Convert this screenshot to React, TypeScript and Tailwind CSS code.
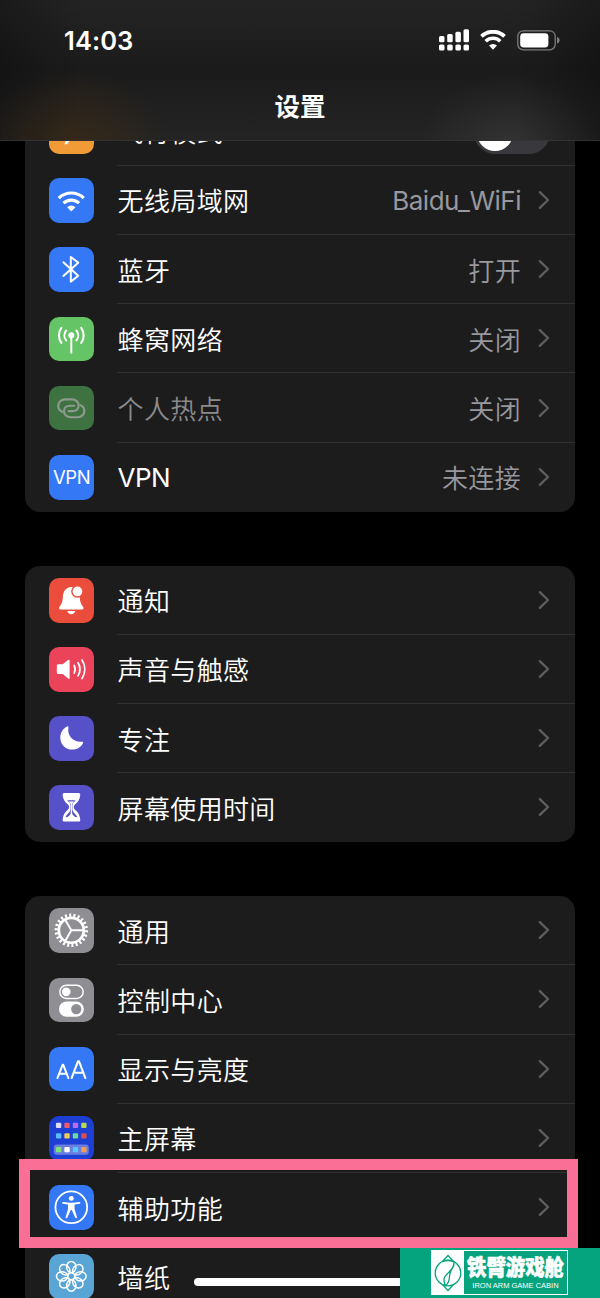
import type { ReactNode } from "react";

type RowData = {
  label: string;
  icon: ReactNode;
  tile: string;
  value?: string;
  dimmed?: boolean;
  toggle?: boolean;
};

const Glyph = ({ children }: { children: ReactNode }) => (
  <svg viewBox="0 0 45 45" className="block size-full" fill="none" stroke="none">
    {children}
  </svg>
);

const PlaneIcon = () => (
  <Glyph>
    <path d="M37 22c0-2-2-2.600-4-2.600h-6L19 8h-3l4 11.400h-6L11 16H8.500l2 6.500-2 6.500H11l3-3.500h6L15.500 35.500H18l9-10h6c2 0 4-1 4-3.500Z" fill="#fff" />
  </Glyph>
);

const WifiIcon = () => (
  <Glyph>
    <path d="M9.900 20.300a18 18 0 0 1 25.200 0" stroke="#fff" strokeWidth="3.200" />
    <path d="M14.600 25.400a11.500 11.500 0 0 1 15.800 0" stroke="#fff" strokeWidth="3.200" />
    <path d="M18.300 29.500a6 6 0 0 1 8.400 0l-4.200 4.200Z" fill="#fff" />
  </Glyph>
);

const BluetoothIcon = () => (
  <Glyph>
    <path d="m14.500 15.500 15 13.500-7.500 6V10l7.500 5.800-15 13.400" stroke="#fff" strokeWidth="2" strokeLinejoin="round" strokeLinecap="round" />
  </Glyph>
);

const CellularIcon = () => (
  <Glyph>
    <circle cx="22.500" cy="18.500" r="3" fill="#fff" />
    <path d="M22.500 19v17" stroke="#fff" strokeWidth="2" strokeLinecap="round" />
    <path
      d="M17.300 13.600a8 8 0 0 0 0 10M12.500 11a13 13 0 0 0 0 15.200M27.700 13.600a8 8 0 0 1 0 10M32.500 11a13 13 0 0 1 0 15.200"
      stroke="#fff"
      strokeWidth="2.100"
      strokeLinecap="round"
    />
  </Glyph>
);

const HotspotIcon = () => (
  <Glyph>
    <path
      d="M13.200 25.900C10.700 24.600 9.300 22.500 9.300 20.100c0-3.700 3-6.600 6.700-6.600h7.300c3.700 0 6.600 2.700 6.600 6.200s-2.800 5.600-5.700 5.600h-4.500"
      stroke="#8d9a8e"
      strokeWidth="2.200"
      strokeLinecap="round"
    />
    <path
      d="M31.800 19.300c2.500 1.300 3.900 3.400 3.900 5.800 0 3.700-3 6.400-6.700 6.400h-7.300c-3.700 0-6.600-2.600-6.600-6.100s2.800-5.500 5.700-5.500h4.500"
      stroke="#8d9a8e"
      strokeWidth="2.200"
      strokeLinecap="round"
    />
  </Glyph>
);

const BellIcon = ({ color }: { color: string }) => (
  <Glyph>
    <path
      d="M22.500 9c-5.600.5-8.300 4.500-8.500 10-.2 5-1.300 7.300-3 9.500-1.400 1.700-1.200 3.300 1 3.300h21c2.200 0 2.400-1.600 1-3.300-1.700-2.200-2.800-4.500-3-9.500-.2-5.500-2.900-9.500-8.500-10Z"
      fill="#fff"
    />
    <path d="M18.500 33.400h8c-.4 2-1.900 3.200-4 3.200s-3.600-1.200-4-3.200Z" fill="#fff" />
    <circle cx="28.700" cy="13.600" r="6.300" fill={color} />
    <circle cx="28.700" cy="13.600" r="4.900" fill="#fff" />
  </Glyph>
);

const SpeakerIcon = () => (
  <Glyph>
    <path d="M9.500 17.500h4.300l5.500-4.400c.8-.6 1.500-.3 1.500.7v17.400c0 1-.7 1.300-1.500.7l-5.500-4.600H9.500c-1 0-1.600-.6-1.600-1.600v-6.600c0-1 .6-1.600 1.600-1.600Z" fill="#fff" />
    <path
      d="M25.400 18.700c1.300 2.400 1.300 5.200 0 7.600M29.300 15.900c2.400 4 2.400 9.200 0 13.200M33.300 13.200c3.700 5.700 3.700 12.900 0 18.600"
      stroke="#fff"
      strokeWidth="1.800"
      strokeLinecap="round"
    />
  </Glyph>
);

const MoonIcon = () => (
  <Glyph>
    <path d="M18.300 10.600c.8-.4 1.500.1 1.300 1-1.500 8.200 5 15.300 13.600 14.300 1-.1 1.500.6 1 1.500-2 4-6.100 6.500-10.800 6.500-6.700 0-12-5.300-12-12 0-5 2.600-9.300 6.900-11.300Z" fill="#fff" />
  </Glyph>
);

const HourglassIcon = () => (
  <Glyph>
    <path
      d="M15.500 8h14.300c1.400 0 2 1 1.700 2.300-.5 4.500-2.200 6.800-5 9.200-2 1.700-2 3.900 0 5.700 2.800 2.400 4.500 4.700 5 9.300.3 1.400-.3 2.400-1.700 2.400H15.500c-1.400 0-2-1-1.700-2.400.5-4.600 2.200-6.900 5-9.300 2-1.800 2-4 0-5.700-2.800-2.400-4.500-4.700-5-9.200C13.500 9 14.100 8 15.500 8Z"
      fill="#fff"
    />
    <path d="M18.300 15.700c2.700-.5 5.900-.5 8.600 0-2.200 1.800-3.300 3-3.300 5v3.600c0 3.500 3.600 5 5 8.300-3-.2-4.200-1.300-6-2.900-1.800 1.600-3 2.700-6 2.900 1.400-3.300 5-4.800 5-8.300v-3.600c0-2-1.100-3.200-3.300-5Z" fill="#5651c9" />
    <path d="M20 16.700h5.200l-1.900 2.400v9.300c.6 1.700 1.800 2.900 3.600 4.200h-8.600c1.800-1.300 3-2.500 3.600-4.200v-9.300Z" fill="#fff" />
  </Glyph>
);

const GearIcon = () => (
  <Glyph>
    <circle cx="22.500" cy="22.500" r="12.600" stroke="#fff" strokeWidth="2.700" />
    <circle cx="22.500" cy="22.500" r="15.200" stroke="#fff" strokeWidth="3.400" pathLength="88" strokeDasharray="1.900 2.100" />
    <path d="M22.500 22.500h12.500M22.500 22.500l-6.300-11M22.500 22.500l-6.300 11" stroke="#fff" strokeWidth="2" />
  </Glyph>
);

const SwitchesIcon = () => (
  <Glyph>
    <rect x="10.900" y="7.400" width="23.600" height="13.200" rx="6.600" stroke="#fff" strokeWidth="1.500" />
    <circle cx="17.400" cy="14" r="4.400" fill="#fff" />
    <rect x="10" y="23.800" width="25.200" height="15.200" rx="7.600" fill="#fff" />
    <circle cx="27.500" cy="31.400" r="5.200" fill="#8e8e93" />
  </Glyph>
);

const TextSizeIcon = () => (
  <Glyph>
    <path d="M8.500 31.300 13.700 18h.7l5.200 13.300M10.400 27h7.200" stroke="#fff" strokeWidth="2" strokeLinecap="round" strokeLinejoin="round" />
    <path d="m22.800 31.300 6.500-17h.9l6.500 17M25 26h9.500" stroke="#fff" strokeWidth="2.100" strokeLinecap="round" strokeLinejoin="round" />
  </Glyph>
);

const appColors = [
  ["#dcdcf4", "#f0596e", "#b66cf6", "#b9d84f"],
  ["#57bdf3", "#f5c957", "#6bdba2", "#dd4c47"],
  ["#7ee276", "#ffffff", "#55c5fa", "#f49b55"],
];

const HomeIcon = () => (
  <Glyph>
    <rect x="4.900" y="28.800" width="35.200" height="10.300" rx="3" fill="#6a7fe0" />
    {appColors.map((row, r) =>
      row.map((fill, c) => (
        <rect key={`${r}-${c}`} x={7 + c * 8.500} y={[6.800, 17.400, 31.200][r]} width="5.400" height="5.400" rx="1" fill={fill} />
      )),
    )}
  </Glyph>
);

const AccessibilityIcon = () => (
  <Glyph>
    <circle cx="22.500" cy="22.500" r="16" stroke="#fff" strokeWidth="1.800" />
    <circle cx="22.500" cy="13.500" r="2.500" fill="#fff" />
    <path d="M14.500 17.200c5.300.8 10.700.8 16 0 1.500-.2 1.700 1.400.5 1.600l-5.200 1v4.500l2.400 7.900c.3 1.300-1.300 1.700-1.800.6l-3.400-7.500h-1l-3.400 7.500c-.5 1.100-2.100.7-1.800-.6l2.400-7.900v-4.500l-5.200-1c-1.200-.2-1-1.800.5-1.600Z" fill="#fff" />
  </Glyph>
);

const FlowerIcon = () => (
  <Glyph>
    {[0, 45, 90, 135, 180, 225, 270, 315].map((a) => (
      <ellipse
        key={a}
        transform={`rotate(${a} 22.500 22.500)`}
        cx="22.500"
        cy="13.200"
        rx="4.700"
        ry="5.700"
        stroke="#fff"
        strokeWidth="1.500"
      />
    ))}
    <circle cx="22.500" cy="22.500" r="3.500" stroke="#fff" strokeWidth="1.500" />
  </Glyph>
);

const VpnIcon = () => <span className="text-[18.5px] leading-none tracking-[-0.3px] text-white">VPN</span>;

const network: RowData[] = [
  { label: "飞行模式", icon: <PlaneIcon />, tile: "bg-[#f09a38]", toggle: true },
  { label: "无线局域网", icon: <WifiIcon />, tile: "bg-[#3478f6]", value: "Baidu_WiFi" },
  { label: "蓝牙", icon: <BluetoothIcon />, tile: "bg-[#3478f6]", value: "打开" },
  { label: "蜂窝网络", icon: <CellularIcon />, tile: "bg-[#65c466]", value: "关闭" },
  { label: "个人热点", icon: <HotspotIcon />, tile: "bg-[#3f7241]", value: "关闭", dimmed: true },
  { label: "VPN", icon: <VpnIcon />, tile: "bg-[#3478f6]", value: "未连接" },
];

const alerts: RowData[] = [
  { label: "通知", icon: <BellIcon color="#eb4d3d" />, tile: "bg-[#eb4d3d]" },
  { label: "声音与触感", icon: <SpeakerIcon />, tile: "bg-[#eb445a]" },
  { label: "专注", icon: <MoonIcon />, tile: "bg-[#5651c9]" },
  { label: "屏幕使用时间", icon: <HourglassIcon />, tile: "bg-[#5651c9]" },
];

const general: RowData[] = [
  { label: "通用", icon: <GearIcon />, tile: "bg-[#8e8e93]" },
  { label: "控制中心", icon: <SwitchesIcon />, tile: "bg-[#8e8e93]" },
  { label: "显示与亮度", icon: <TextSizeIcon />, tile: "bg-[#3478f6]" },
  { label: "主屏幕", icon: <HomeIcon />, tile: "bg-[#1d3fd3]" },
  { label: "辅助功能", icon: <AccessibilityIcon />, tile: "bg-[#3478f6]" },
  { label: "墙纸", icon: <FlowerIcon />, tile: "bg-[#59a5d6]" },
];

const Chevron = () => (
  <svg viewBox="0 0 12 20" className="ml-[17px] h-5 w-3 shrink-0" fill="none">
    <path d="m1.800 2.200 8.200 7.800-8.200 7.800" stroke="#5e5e62" strokeWidth="2.400" strokeLinecap="round" strokeLinejoin="round" />
  </svg>
);

const isLatin = (text: string) => /^[\w ]+$/.test(text);

const textStyle = (text: string) =>
  isLatin(text) ? "pt-[3px] tracking-[-0.5px] font-normal" : "pt-[5px] tracking-[0.35px] font-[350]";

const Row = ({ row, last }: { row: RowData; last: boolean }) => (
  <div className="flex h-[69.2px] items-center pl-[24.4px]">
    <div className={`flex size-[44.6px] shrink-0 items-center justify-center overflow-hidden rounded-[10px] ${row.tile}`}>
      {row.icon}
    </div>
    <div className={`ml-[23px] flex h-full flex-1 items-center border-b pr-[25px] ${last ? "border-transparent" : "border-[#303031]"}`}>
      <span className={`flex-1 pl-[0.6px] text-[26px] leading-9 ${textStyle(row.label)} ${row.dimmed ? "text-[#8b8b8d]" : "text-white"}`}>
        {row.label}
      </span>
      {row.value && <span className={`text-[26px] leading-9 text-[#98989e] ${textStyle(row.value)}`}>{row.value}</span>}
      {row.toggle ? (
        <div className="mt-[5px] flex h-[42px] w-[76px] items-center rounded-full bg-[#39393d] p-[3px]">
          <div className="size-9 rounded-full bg-white" />
        </div>
      ) : (
        <Chevron />
      )}
    </div>
  </div>
);

const Group = ({ rows }: { rows: RowData[] }) => (
  <section className="mx-[25px] shrink-0 rounded-[15px] bg-[#1c1c1d]">
    {rows.map((row, i) => (
      <Row key={row.label} row={row} last={i === rows.length - 1} />
    ))}
  </section>
);

const SignalIcon = () => (
  <svg viewBox="0 0 30 22" className="h-[22px] w-[30px]" fill="#fff">
    <rect x="0" y="7" width="5.500" height="6.300" rx="1.500" />
    <rect x="8.200" y="5" width="5.500" height="8.300" rx="1.500" />
    <rect x="16.400" y="2.700" width="5.500" height="10.600" rx="1.500" />
    <rect x="24.500" y="0.300" width="5.500" height="13" rx="1.500" />
    <rect x="0" y="15.500" width="5.500" height="6" rx="1.500" />
    <rect x="8.200" y="15.500" width="5.500" height="6" rx="1.500" />
    <rect x="16.400" y="15.500" width="5.500" height="6" rx="1.500" />
    <rect x="24.500" y="15.500" width="5.500" height="6" rx="1.500" />
  </svg>
);

const StatusWifi = () => (
  <svg viewBox="0 0 26 20" className="ml-[11px] h-5 w-[26px]" fill="none">
    <path d="M1.500 6.400a16.600 16.600 0 0 1 23 0" stroke="#fff" strokeWidth="3.900" />
    <path d="M5.700 11.200a10.600 10.600 0 0 1 14.600 0" stroke="#fff" strokeWidth="3.600" />
    <path d="M9 15.600a5.800 5.800 0 0 1 8 0l-4 4.100Z" fill="#fff" />
  </svg>
);

const Battery = () => (
  <svg viewBox="0 0 43 21" className="ml-[11px] h-[21px] w-[43px]" fill="none">
    <rect x="0.800" y="0.800" width="37.400" height="19" rx="5.500" stroke="#7d7d7d" strokeWidth="1.300" />
    <rect x="3.200" y="3.200" width="28.200" height="14.200" rx="3.400" fill="#fff" />
    <path d="M40 7c1.800.7 2.600 1.800 2.600 3.300s-.8 2.600-2.600 3.300Z" fill="#7d7d7d" />
  </svg>
);

const Header = () => (
  <header className="relative z-10 flex h-[141px] shrink-0 flex-col border-b border-[#323232] bg-[radial-gradient(90px_70px_at_75px_140px,rgba(80,48,10,0.4),transparent),radial-gradient(90px_65px_at_510px_140px,rgba(255,255,255,0.065),transparent),linear-gradient(90deg,rgba(0,0,0,0.28),transparent_14%,transparent_86%,rgba(0,0,0,0.28)),linear-gradient(#242424,#1b1b1b_50%,#242424)] text-white">
    <div className="flex h-[80px] items-center justify-between pr-10 pl-[64px]">
      <span className="pt-[3px] text-[25.5px] font-semibold tracking-[0.1px]">14:03</span>
      <div className="flex items-center">
        <SignalIcon />
        <StatusWifi />
        <Battery />
      </div>
    </div>
    <h1 className="pt-[9px] text-center text-[25.5px] leading-9 font-bold">设置</h1>
  </header>
);

const Watermark = () => (
  <div className="absolute right-0 bottom-0 flex h-[50px] w-[200px] bg-[#05a47e] pt-[2px] pl-[31px]">
    <div className="flex h-[45px] w-[137px] border border-white">
      <div className="flex w-[32px] shrink-0 items-center justify-center bg-white">
        <svg viewBox="0 0 30 40" className="h-10 w-[30px]" fill="none" stroke="#05a47e" strokeWidth="1.300">
          <circle cx="15" cy="20" r="12.800" />
          <path d="M9.500 8.500 15 2.500l5.500 6M9.500 31.500l5.500 6 5.500-6" />
          <path d="M9 8.700c3.700-1.500 8.300-1.500 12 0C22 18 11.500 20 11 26c-.2 3 1 5 1.500 6.600M21 8.700c1 4.300-4.500 9-4.500 14.300 0 4-1 7.500-4 9.600" />
        </svg>
      </div>
      <div className="flex flex-1 flex-col items-center text-white">
        <span className="origin-center scale-y-110 pt-[5px] text-[19.4px] leading-[23px] font-black whitespace-nowrap [-webkit-text-stroke:0.5px_white]">铁臂游戏舱</span>
        <span className="pt-[2px] font-['Liberation_Sans'] text-[7.5px] leading-[9px] whitespace-nowrap">IRON ARM GAME CABIN</span>
      </div>
    </div>
  </div>
);

export default function App() {
  return (
    <div className="relative flex h-[1298px] w-[600px] flex-col overflow-hidden bg-black font-[Inter,'Noto_Sans_CJK_SC',sans-serif]">
      <Header />
      <main className="-mt-[44.3px] flex flex-col gap-[53.8px]">
        <Group rows={network} />
        <Group rows={alerts} />
        <Group rows={general} />
      </main>
      <div className="absolute bottom-3 left-[194px] h-2 w-[212px] rounded-full bg-white" />
      <div className="absolute top-[1159px] left-[19px] h-[89px] w-[559px] border-[11px] border-[#f96f96]" />
      <Watermark />
    </div>
  );
}
